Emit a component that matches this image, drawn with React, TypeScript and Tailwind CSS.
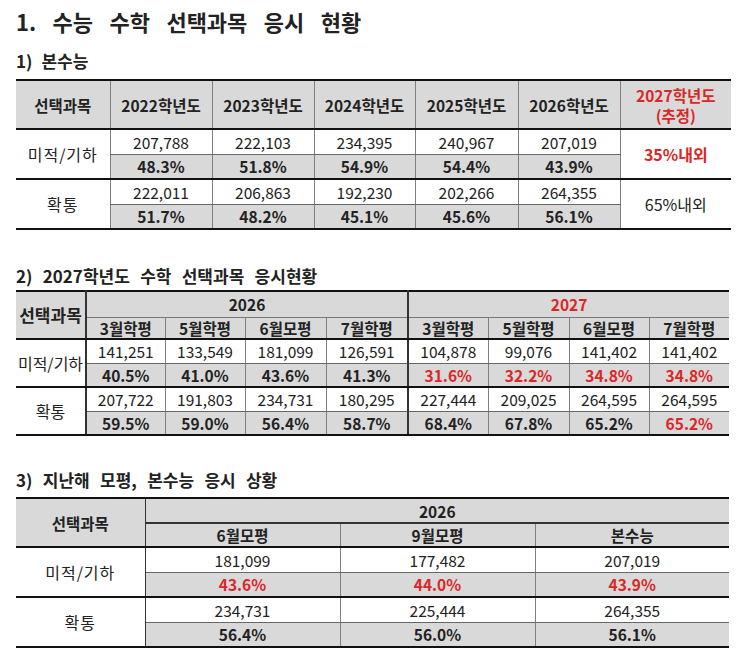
import React from 'react';

const RED = 'text-[#dc2626]';
const GRAY = 'bg-[#d9d9d9]';
const thinV = 'border-l border-l-[#808080]';
const NAME = 'text-[16px] tracking-[0.06em] whitespace-nowrap';

type Cell = { v: string; red?: boolean };

const t1 = [
  {
    name: '미적/기하',
    nums: ['207,788', '222,103', '234,395', '240,967', '207,019'],
    pcts: ['48.3%', '51.8%', '54.9%', '54.4%', '43.9%'],
    est: '35%내외',
    estRed: true,
  },
  {
    name: '확통',
    nums: ['222,011', '206,863', '192,230', '202,266', '264,355'],
    pcts: ['51.7%', '48.2%', '45.1%', '45.6%', '56.1%'],
    est: '65%내외',
    estRed: false,
  },
];

const t2: { name: string; nums: string[]; pcts: Cell[] }[] = [
  {
    name: '미적/기하',
    nums: ['141,251', '133,549', '181,099', '126,591', '104,878', '99,076', '141,402', '141,402'],
    pcts: [
      { v: '40.5%' }, { v: '41.0%' }, { v: '43.6%' }, { v: '41.3%' },
      { v: '31.6%', red: true }, { v: '32.2%', red: true }, { v: '34.8%', red: true }, { v: '34.8%', red: true },
    ],
  },
  {
    name: '확통',
    nums: ['207,722', '191,803', '234,731', '180,295', '227,444', '209,025', '264,595', '264,595'],
    pcts: [
      { v: '59.5%' }, { v: '59.0%' }, { v: '56.4%' }, { v: '58.7%' },
      { v: '68.4%' }, { v: '67.8%' }, { v: '65.2%' }, { v: '65.2%', red: true },
    ],
  },
];

const t3: { name: string; nums: string[]; pcts: Cell[] }[] = [
  {
    name: '미적/기하',
    nums: ['181,099', '177,482', '207,019'],
    pcts: [{ v: '43.6%', red: true }, { v: '44.0%', red: true }, { v: '43.9%', red: true }],
  },
  {
    name: '확통',
    nums: ['234,731', '225,444', '264,355'],
    pcts: [{ v: '56.4%' }, { v: '56.0%' }, { v: '56.1%' }],
  },
];

const months = ['3월학평', '5월학평', '6월모평', '7월학평'];

export default function App() {
  return (
    <div className="w-[743px] h-[661px] bg-white px-4 text-[#222] font-['Noto_Sans_CJK_KR',sans-serif]">
      <h1 className="mt-[6px] h-[30px] leading-[30px] text-[22px] font-bold [word-spacing:0.52em]">
        1. 수능 수학 선택과목 응시 현황
      </h1>

      <h2 className="mt-[14px] h-[22px] leading-[22px] text-[17px] font-bold [word-spacing:0.3em]">1) 본수능</h2>
      <table className="mt-[7px] table-fixed border-collapse w-[715px] text-[15.5px] text-center leading-[20px]">
        <colgroup>
          <col className="w-[94px]" />
          <col className="w-[102px]" />
          <col className="w-[102px]" />
          <col className="w-[101px]" />
          <col className="w-[103px]" />
          <col className="w-[102px]" />
          <col className="w-[111px]" />
        </colgroup>
        <tbody>
          <tr className={`h-[49px] ${GRAY} font-bold`}>
            <td className="border-t-2 border-t-[#111] border-b-2 border-b-[#111]">선택과목</td>
            {['2022학년도', '2023학년도', '2024학년도', '2025학년도', '2026학년도'].map((y) => (
              <td key={y} className={`${thinV} border-t-2 border-t-[#111] border-b-2 border-b-[#111]`}>
                {y}
              </td>
            ))}
            <td className={`${thinV} border-t-2 border-t-[#111] border-b-2 border-b-[#111] ${RED}`}>
              2027학년도
              <br />
              (추정)
            </td>
          </tr>
          {t1.map((g) => (
            <React.Fragment key={g.name}>
              <tr className="h-[25px]">
                <td rowSpan={2} className={`${NAME} border-b-2 border-b-[#111] bg-white`}>
                  {g.name}
                </td>
                {g.nums.map((n, i) => (
                  <td key={i} className={`${thinV} border-b border-b-[#666]`}>
                    {n}
                  </td>
                ))}
                <td
                  rowSpan={2}
                  className={`${thinV} border-b-2 border-b-[#111] text-[16px] ${g.estRed ? `${RED} font-bold` : ''}`}
                >
                  {g.est}
                </td>
              </tr>
              <tr className={`h-[25px] ${GRAY} font-bold`}>
                {g.pcts.map((p, i) => (
                  <td key={i} className={`${thinV} border-b-2 border-b-[#111]`}>
                    {p}
                  </td>
                ))}
              </tr>
            </React.Fragment>
          ))}
        </tbody>
      </table>

      <h2 className="mt-[35px] h-[22px] leading-[22px] text-[17px] font-bold [word-spacing:0.38em]">
        2) 2027학년도 수학 선택과목 응시현황
      </h2>
      <table className="mt-[3px] table-fixed border-collapse w-[713px] text-[15.5px] text-center leading-[20px]">
        <colgroup>
          <col className="w-[70px]" />
          <col className="w-[79px]" />
          <col className="w-[80px]" />
          <col className="w-[81px]" />
          <col className="w-[82px]" />
          <col className="w-[80px]" />
          <col className="w-[81px]" />
          <col className="w-[80px]" />
          <col className="w-[80px]" />
        </colgroup>
        <tbody>
          <tr className={`h-[26px] ${GRAY} font-bold`}>
            <td
              rowSpan={2}
              className="text-[17px] border-t-2 border-t-[#111] border-b-2 border-b-[#111] border-r-2 border-r-[#333]"
            >
              선택과목
            </td>
            <td colSpan={4} className="border-t-2 border-t-[#111] border-b border-b-[#777] border-r-2 border-r-[#333]">
              2026
            </td>
            <td colSpan={4} className={`border-t-2 border-t-[#111] border-b border-b-[#777] ${RED}`}>
              2027
            </td>
          </tr>
          <tr className={`h-[22px] ${GRAY} font-bold`}>
            {[...months, ...months].map((m, i) => (
              <td
                key={i}
                className={`border-b-2 border-b-[#111] ${i === 3 ? 'border-r-2 border-r-[#333]' : ''} ${
                  i > 0 && i !== 4 ? thinV : ''
                }`}
              >
                {m}
              </td>
            ))}
          </tr>
          {t2.map((g) => (
            <React.Fragment key={g.name}>
              <tr className="h-[24px]">
                <td
                  rowSpan={2}
                  className="text-[16px] whitespace-nowrap px-0 border-b-2 border-b-[#111] border-r-2 border-r-[#333] bg-white"
                >
                  {g.name}
                </td>
                {g.nums.map((n, i) => (
                  <td
                    key={i}
                    className={`border-b border-b-[#666] ${i === 3 ? 'border-r-2 border-r-[#333]' : ''} ${
                      i > 0 && i !== 4 ? thinV : ''
                    }`}
                  >
                    {n}
                  </td>
                ))}
              </tr>
              <tr className={`h-[24px] ${GRAY} font-bold`}>
                {g.pcts.map((p, i) => (
                  <td
                    key={i}
                    className={`border-b-2 border-b-[#111] ${i === 3 ? 'border-r-2 border-r-[#333]' : ''} ${
                      i > 0 && i !== 4 ? thinV : ''
                    } ${p.red ? RED : ''}`}
                  >
                    {p.v}
                  </td>
                ))}
              </tr>
            </React.Fragment>
          ))}
        </tbody>
      </table>

      <h2 className="mt-[33px] h-[22px] leading-[22px] text-[17px] font-bold [word-spacing:0.38em]">
        3) 지난해 모평, 본수능 응시 상황
      </h2>
      <table className="mt-[6px] table-fixed border-collapse w-[713px] text-[15.5px] text-center leading-[20px]">
        <colgroup>
          <col className="w-[129px]" />
          <col className="w-[195px]" />
          <col className="w-[195px]" />
          <col className="w-[194px]" />
        </colgroup>
        <tbody>
          <tr className={`h-[25px] ${GRAY} font-bold`}>
            <td rowSpan={2} className="border-t-2 border-t-[#111] border-b-2 border-b-[#111] border-r border-r-[#333]">
              선택과목
            </td>
            <td colSpan={3} className="border-t-2 border-t-[#111] border-b-2 border-b-[#333]">
              2026
            </td>
          </tr>
          <tr className={`h-[24px] ${GRAY} font-bold`}>
            {['6월모평', '9월모평', '본수능'].map((m, i) => (
              <td key={m} className={`border-b-2 border-b-[#111] ${i > 0 ? thinV : ''}`}>
                {m}
              </td>
            ))}
          </tr>
          {t3.map((g) => (
            <React.Fragment key={g.name}>
              <tr className="h-[25px]">
                <td rowSpan={2} className={`${NAME} border-b-2 border-b-[#111] border-r border-r-[#333] bg-white`}>
                  {g.name}
                </td>
                {g.nums.map((n, i) => (
                  <td key={i} className={`border-b border-b-[#666] ${i > 0 ? thinV : ''}`}>
                    {n}
                  </td>
                ))}
              </tr>
              <tr className={`h-[25px] ${GRAY} font-bold`}>
                {g.pcts.map((p, i) => (
                  <td
                    key={i}
                    className={`border-b-2 border-b-[#111] ${i > 0 ? thinV : ''} ${p.red ? RED : ''}`}
                  >
                    {p.v}
                  </td>
                ))}
              </tr>
            </React.Fragment>
          ))}
        </tbody>
      </table>
    </div>
  );
}
